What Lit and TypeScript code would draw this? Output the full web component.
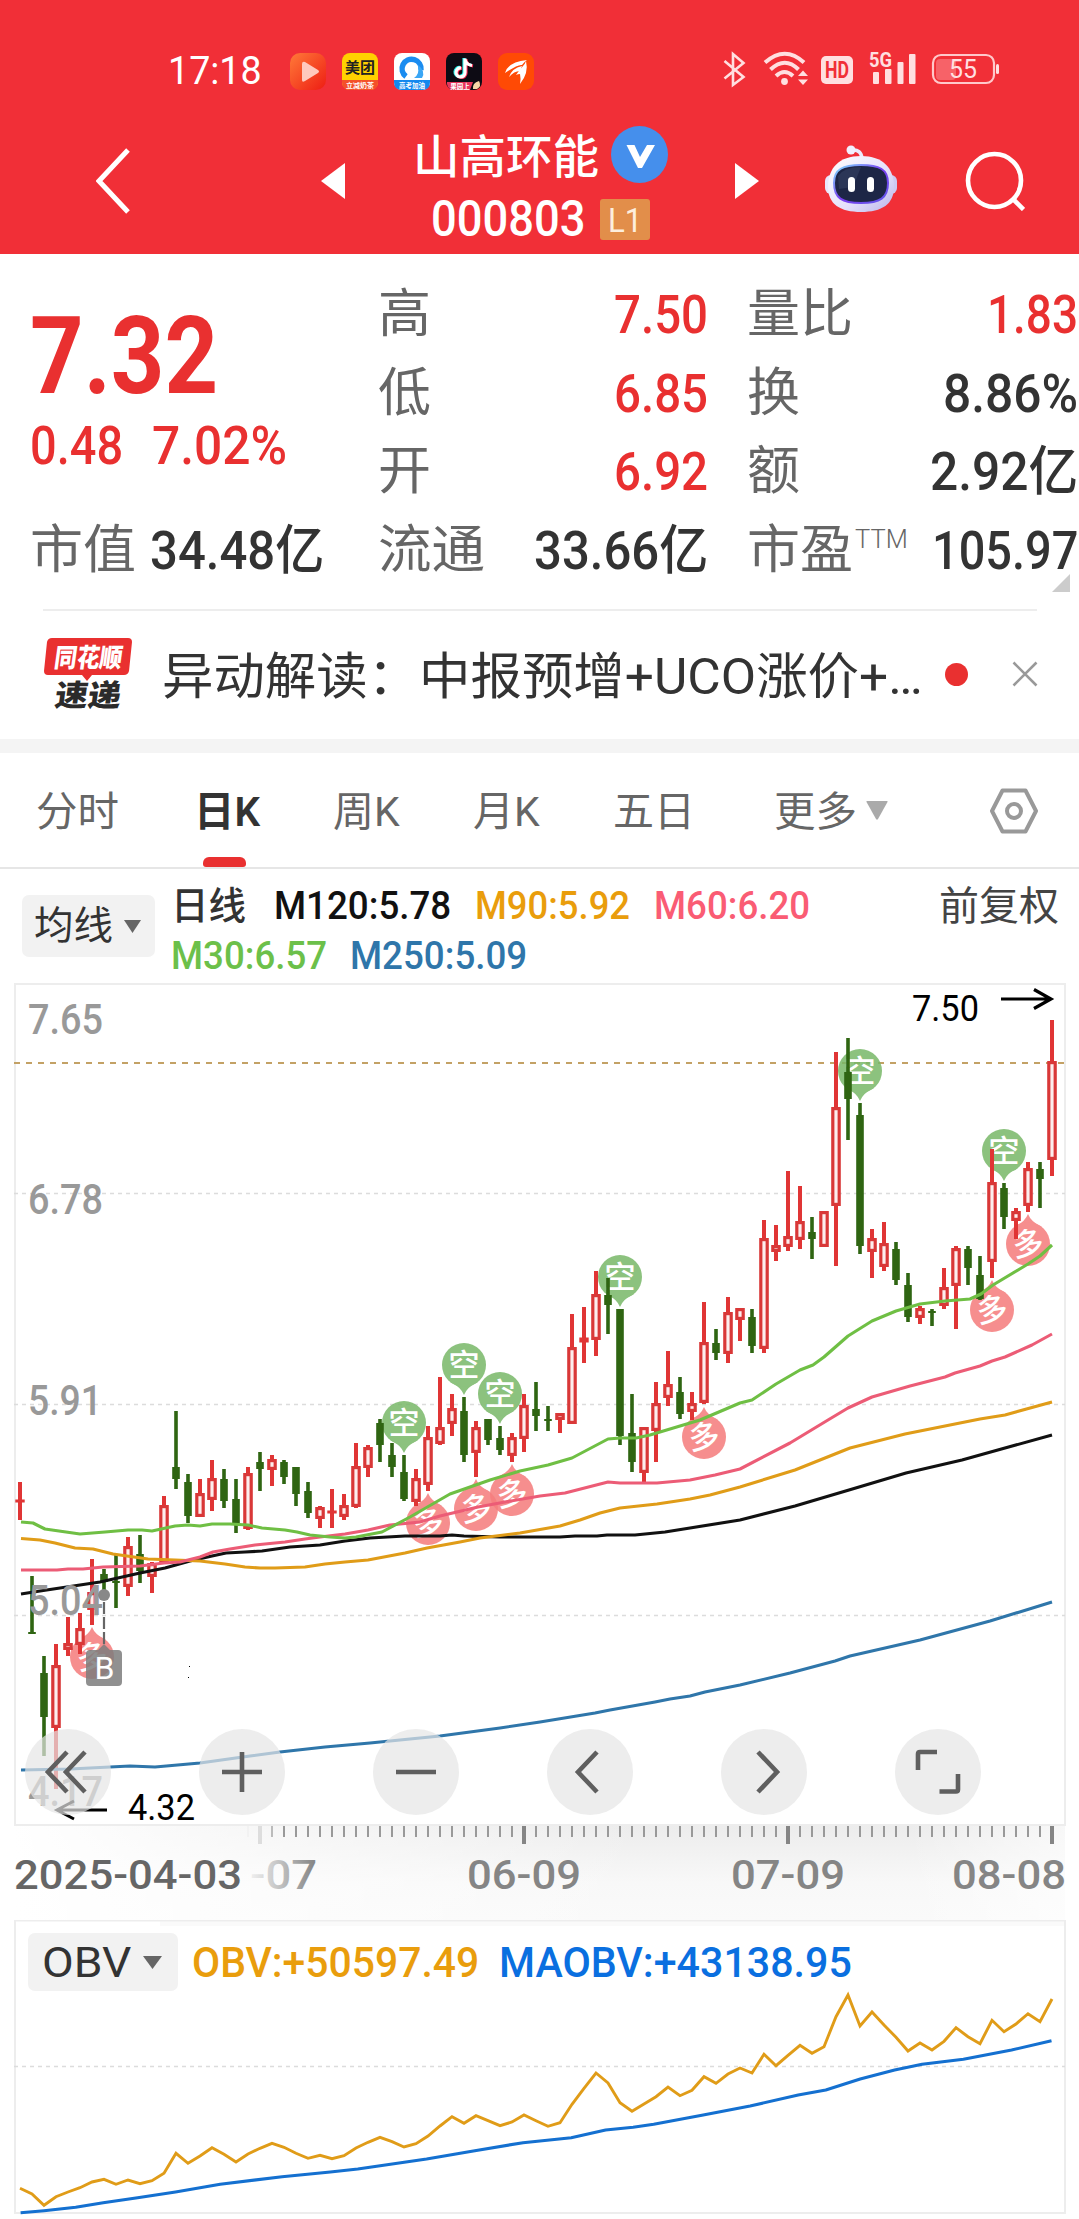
import { LitElement, html, css, svg } from "lit";
import { customElement, property, state } from "lit/decorators.js";

/** Single line of text squeezed or stretched horizontally to a given width. */
@customElement("fit-text")
class FitText extends LitElement {
  @property({ type: Number }) w = 0;
  @state() private ratio = 1;

  static styles = css`
    :host { display: inline-block; white-space: nowrap; flex: none; text-align: left; }
    .in { display: inline-block; transform-origin: 0 50%; }
    .box { display: block; }
  `;

  firstUpdated() {
    const el = this.renderRoot.querySelector(".in") as HTMLElement;
    const n = el.offsetWidth;
    if (n > 0) this.ratio = this.w / n;
  }

  render() {
    return html`<span class="box" style="width:${this.w}px"
      ><span class="in" style="transform:scaleX(${this.ratio})"><slot></slot></span></span>`;
  }
}

type Candle = [number, number, number, number, number];

// [up, high, body top, body bottom, low] in chart pixels
const CANDLES: Candle[] = [
  [1, 1482, 1500, 1502, 1520], [0, 1576, 1632, 1634, 1634], [0, 1656, 1673, 1717, 1756],
  [1, 1644, 1665, 1728, 1789], [1, 1617, 1643, 1650, 1656], [1, 1613, 1628, 1645, 1654],
  [1, 1559, 1592, 1610, 1625], [0, 1569, 1574, 1582, 1596], [0, 1555, 1581, 1583, 1608],
  [1, 1537, 1546, 1587, 1596], [0, 1535, 1554, 1571, 1583], [1, 1562, 1563, 1577, 1593],
  [1, 1496, 1505, 1564, 1564], [0, 1411, 1467, 1479, 1489], [0, 1474, 1482, 1516, 1523],
  [1, 1479, 1493, 1517, 1517], [1, 1460, 1478, 1500, 1511], [0, 1469, 1479, 1501, 1508],
  [0, 1479, 1499, 1523, 1533], [1, 1467, 1473, 1529, 1530], [0, 1452, 1462, 1469, 1491],
  [1, 1455, 1459, 1470, 1486], [0, 1460, 1462, 1477, 1484], [0, 1467, 1467, 1494, 1506],
  [0, 1482, 1491, 1513, 1518], [1, 1506, 1507, 1519, 1528], [1, 1489, 1511, 1513, 1528],
  [1, 1494, 1505, 1517, 1520], [1, 1443, 1466, 1507, 1508], [1, 1445, 1447, 1468, 1477],
  [0, 1419, 1423, 1445, 1462], [0, 1443, 1455, 1467, 1477], [0, 1455, 1472, 1499, 1501],
  [1, 1469, 1478, 1502, 1506], [1, 1426, 1437, 1485, 1491], [1, 1377, 1427, 1444, 1445],
  [1, 1394, 1408, 1424, 1436], [0, 1397, 1411, 1455, 1462], [1, 1421, 1427, 1453, 1477],
  [0, 1419, 1419, 1440, 1445], [0, 1426, 1438, 1450, 1455], [1, 1433, 1437, 1456, 1462],
  [1, 1394, 1405, 1439, 1452], [0, 1382, 1409, 1416, 1431], [0, 1406, 1419, 1421, 1431],
  [1, 1413, 1413, 1420, 1433], [1, 1314, 1347, 1424, 1424], [1, 1307, 1338, 1342, 1363],
  [1, 1271, 1294, 1340, 1356], [0, 1278, 1295, 1305, 1334], [0, 1309, 1309, 1436, 1445],
  [0, 1394, 1433, 1462, 1472], [1, 1427, 1427, 1473, 1482], [1, 1382, 1403, 1431, 1462],
  [1, 1351, 1384, 1398, 1406], [0, 1377, 1392, 1414, 1419], [1, 1392, 1403, 1412, 1420],
  [1, 1302, 1342, 1403, 1404], [0, 1329, 1343, 1353, 1360], [1, 1297, 1312, 1354, 1363],
  [1, 1308, 1308, 1320, 1341], [0, 1309, 1317, 1346, 1353], [1, 1220, 1238, 1349, 1353],
  [1, 1225, 1245, 1252, 1261], [1, 1171, 1236, 1247, 1251], [1, 1186, 1221, 1240, 1249],
  [0, 1217, 1232, 1239, 1259], [1, 1211, 1211, 1247, 1247], [1, 1052, 1107, 1206, 1266],
  [0, 1038, 1072, 1099, 1140], [0, 1103, 1115, 1246, 1254], [1, 1229, 1238, 1252, 1278],
  [1, 1222, 1243, 1267, 1271], [0, 1242, 1249, 1280, 1285], [0, 1273, 1285, 1317, 1322],
  [1, 1306, 1308, 1318, 1324], [0, 1309, 1311, 1313, 1326], [1, 1268, 1287, 1306, 1309],
  [1, 1246, 1248, 1286, 1329], [0, 1246, 1249, 1268, 1285], [0, 1256, 1275, 1299, 1300],
  [1, 1149, 1182, 1262, 1278], [0, 1183, 1188, 1217, 1229], [1, 1208, 1211, 1221, 1239],
  [1, 1162, 1168, 1206, 1212], [0, 1162, 1169, 1179, 1208], [1, 1020, 1061, 1160, 1176],
];

const MA = {
  m250: "21,1770 70,1769 110,1767 130,1766 155,1767 200,1763 250,1756 280,1752 325,1747 370,1743 440,1736 500,1728 540,1722 595,1713 610,1710 655,1702 670,1699 690,1696 705,1692 740,1685 790,1673 835,1661 850,1656 920,1640 990,1621 1052,1602",
  m120: "21,1594 40,1591 100,1582 140,1573 165,1568 190,1561 212,1556 226,1553 245,1552 262,1551 290,1547 320,1545 345,1541 370,1538 405,1536 440,1536 452,1535 464,1536 500,1537 560,1537 575,1536 597,1536 607,1535 635,1535 665,1532 690,1528 740,1520 795,1506 849,1490 906,1473 962,1460 1052,1435",
  m90: "21,1538.5 40,1540 55,1543 75,1548 93,1549 113,1554 148,1559 175,1560 200,1561 225,1564 245,1567 260,1568 275,1568 305,1567 325,1564 345,1562 368,1560 405,1553 427,1548 460,1542 480,1538 520,1533 560,1526 580,1520 600,1513 620,1508 657,1504 690,1499 710,1495 740,1487 795,1470 850,1448 905,1434 980,1419 1005,1415 1052,1402",
  m60: "21,1570 57,1570 68,1569 83,1569 103,1567 140,1566 164,1563 180,1562 200,1557 213,1552 230,1549 255,1545 285,1542 305,1539 320,1537 345,1534 368,1530 390,1525 420,1522 440,1516 478,1507 505,1502 540,1496 565,1493 608,1482 620,1483 657,1483 690,1480 715,1475 740,1469 790,1443 828,1420 848,1408 872,1397 910,1386 945,1377 955,1373 980,1366 992,1361 1005,1357 1032,1345 1052,1334",
  m30: "21,1522 33,1523 45,1529 80,1534 105,1532 128,1530 142,1530 152,1531 175,1526 188,1525 200,1526 212,1524 230,1524 248,1525 262,1528 285,1530 297,1532 310,1535 330,1537 345,1538 356,1537 382,1532 410,1517 450,1494 490,1480 520,1471 548,1465 572,1458 608,1439 620,1438 636,1438 650,1435 700,1420 740,1403 752,1400 776,1384 800,1370 813,1365 824,1357 848,1336 872,1321 896,1311 920,1304 945,1301 970,1299 981,1294 993,1285 1028,1264 1040,1256 1052,1245",
};

const OBV = [
  865, 882, 916, 890, 876, 863, 846, 838, 853, 840, 851, 842, 820, 760, 790, 768, 743, 763, 786, 762,
  745, 730, 742, 760, 775, 766, 776, 767, 744, 727, 712, 725, 741, 731, 708, 678, 650, 670, 647, 662,
  677, 666, 645, 662, 679, 668, 613, 565, 519, 549, 608, 634, 612, 590, 561, 587, 571, 530, 550, 522,
  504, 519, 463, 497, 466, 436, 460, 440, 350, 285, 378, 336, 375, 412, 453, 429, 450, 424, 383, 410,
  431, 361, 395, 372, 341, 365, 297,
].map((v, i) => `${20 + i * 12},${(1900 + v / 3).toFixed(1)}`).join(" ");

const MAOBV = [
  [30, 938], [64, 932], [110, 922], [150, 908], [200, 893], [255, 876], [320, 853], [410, 830], [480, 816],
  [520, 807], [620, 777], [690, 752], [760, 728], [830, 713], [880, 690], [920, 682], [950, 673], [1020, 646],
  [1090, 618], [1160, 585], [1200, 570], [1250, 537], [1300, 510], [1340, 493], [1400, 478], [1470, 450], [1528, 422],
].map(([x, y]) => `${(x / 1.4532).toFixed(1)},${(1900 + y / 3).toFixed(1)}`).join(" ");

const SHORTS = [[404, 1423], [464, 1365], [500, 1394], [620, 1277], [860, 1071], [1004, 1151]];
const LONGS = [[92, 1657], [428, 1523], [476, 1509], [512, 1494], [704, 1437], [992, 1310], [1028, 1244]];

const label = (x: number, y: number, w: number, size: number, cls: string, t: string) =>
  svg`<text class=${cls} x=${x} y=${y} font-size=${size} textLength=${w} lengthAdjust="spacingAndGlyphs">${t}</text>`;

const candle = ([up, h, t, b, l]: Candle, i: number) => {
  const x = 20 + i * 12;
  if (!up) {
    return svg`<rect class="dn" x=${x - 1.8} y=${h} width="3.6" height=${Math.max(l - h, 1)}></rect>
      <rect class="dn" x=${x - 3.8} y=${t} width="7.6" height=${b - t}></rect>`;
  }
  const body = b - t < 6
    ? svg`<rect class="up" x=${x - 4.7} y=${t - 0.5} width="9.4" height=${b - t + 1}></rect>`
    : svg`<rect class="hollow" x=${x - 3.2} y=${t + 1.6} width="6.4" height=${b - t - 3.2}></rect>`;
  return svg`<rect class="up" x=${x - 2} y=${h} width="4" height=${t - h}></rect>
    <rect class="up" x=${x - 2} y=${b} width="4" height=${l - b}></rect>${body}`;
};

@customElement("app-root")
class AppRoot extends LitElement {
  static styles = css`
    :host {
      display: block; width: 1079px; height: 2219px; overflow: hidden; background: #fff; color: #333;
      font-family: Roboto, "Noto Sans CJK SC", "Liberation Sans", sans-serif;
    }
    * { box-sizing: border-box; }
    svg { display: block; flex: none; }
    .header { background: #f12f37; height: 254px; color: #fff; padding-top: 49px; }
    .status { display: flex; align-items: center; height: 44px; padding-left: 168px; }
    .clock { font-size: 38px; line-height: 44px; margin-right: 28px; }
    .apps { display: flex; gap: 16px; flex: 1; }
    .nav { display: flex; align-items: center; height: 161px; padding: 14px 0 0 96px; }
    .prev { margin-left: 191px; }
    .title { width: 390px; margin-top: 12px; }
    .line { display: flex; justify-content: center; align-items: center; height: 65px; }
    .line.second { height: 59px; }
    .name { font-size: 46px; line-height: 65px; font-weight: 500; margin-right: 12px; }
    .code { font-size: 50px; line-height: 59px; font-weight: 500; margin-right: 14px; }
    .vip { margin-bottom: 5px; }
    .level { width: 50px; height: 41px; background: #e28e4a; border-radius: 3px; display: flex; justify-content: center; font-size: 34px; line-height: 42px; color: #fdeedd; }
    .robot { margin: -3px 0 0 65px; }
    .search { margin-left: 67px; }

    .quote { display: flex; height: 355px; padding: 22px 0 0 30px; position: relative; }
    .main { width: 294px; margin-right: 54px; }
    .price { height: 149px; padding-top: 13px; font-size: 107px; line-height: 136px; font-weight: 700; color: #e93030; }
    .change { display: flex; gap: 29px; height: 87px; line-height: 42px; font-size: 53px; font-weight: 500; color: #e93030; }
    .col { width: 330px; margin-right: 39px; }
    .col.last { width: 331px; margin-right: 0; }
    .row { height: 78.6px; display: flex; justify-content: space-between; align-items: center; line-height: 78px; }
    .k { font-size: 52px; color: #666; flex: none; display: flex; }
    .ttm { font-size: 26px; line-height: 54px; font-weight: 300; margin-left: 2px; }
    .v { font-size: 53px; font-weight: 500; color: #333; }
    .red { color: #e93030; }
    .corner { position: absolute; left: 1052px; top: 320px; }

    .news { margin: 0 42px 0 43px; border-top: 2px solid #ededed; height: 130px; display: flex; align-items: center; padding-bottom: 2px; }
    .logo { margin-left: -1px; overflow: visible; }
    .headline { font-size: 50px; line-height: 70px; margin: 5px 0 0 28px; }
    .dot { width: 23px; height: 23px; border-radius: 50%; background: #e93030; margin-left: 22px; flex: none; }
    .close { margin-left: 44px; }
    .strip { height: 14px; background: #f4f4f4; }

    .tabs { display: flex; height: 116px; border-bottom: 2px solid #e6e6e6; padding-left: 36px; font-size: 41px; line-height: 118px; color: #666; }
    .tab { flex: none; display: flex; flex-direction: column; align-items: center; }
    .tab fit-text { height: 104px; }
    .tab.on { color: #333; font-weight: 600; }
    .bar { width: 43px; height: 11px; border-radius: 6px 6px 3px 3px; background: #e93030; margin-right: 6px; }
    .g1 { margin-left: 75px; } .g2 { margin-left: 73px; } .g3 { margin-left: 73px; }
    .g4 { margin-left: 73px; } .g5 { margin-left: 79px; }
    .more { margin: 48px 0 0 9px; }
    .gear { margin: 35px 0 0 102px; }

    .legend { display: flex; height: 114px; padding: 0 0 0 22px; }
    .chip { background: #f2f2f2; border-radius: 7px; display: flex; align-items: center; flex: none; }
    .ma { width: 133px; height: 62px; margin-top: 26px; padding-left: 12px; font-size: 39px; line-height: 64px; gap: 11px; }
    .lines { padding-top: 12px; margin-left: 16px; flex: 1; }
    .lr { display: flex; height: 50px; line-height: 50px; font-size: 39px; font-weight: 500; }
    .day { font-size: 38px; margin-right: 28px; width: 75px; }
    .c120 { color: #111; margin-right: 24px; } .c90 { color: #e99d0c; margin-right: 24px; }
    .c60 { color: #fa5c74; } .c30 { color: #6cc04a; margin-right: 23px; } .c250 { color: #2f76aa; }
    .adj { font-size: 40px; line-height: 50px; margin: 13px 20px 0 0; color: #444; }

    .chart { position: relative; height: 937px; }
    .tools { position: absolute; left: 25px; top: 746px; display: flex; gap: 88px; }
    .tool { width: 86px; height: 86px; border-radius: 50%; background: rgba(229, 229, 229, 0.7); display: flex; align-items: center; justify-content: center; }
    .tool path { fill: none; stroke: #5f5f5f; stroke-width: 4.6; }

    .obv { position: relative; height: 299px; }
    .obvhead { position: absolute; left: 28px; top: 13px; display: flex; align-items: center; height: 58px; font-size: 42px; line-height: 61px; }
    .obvchip { width: 150px; height: 58px; padding-left: 14px; gap: 12px; margin-right: 14px; color: #333; }
    .o1 { color: #e99d0c; font-weight: 500; margin-right: 20px; }
    .o2 { color: #0a6fe0; font-weight: 500; }

    .dn { fill: #2f6512; }
    .up { fill: #e03535; }
    .hollow { fill: #fdeeee; stroke: #d93838; stroke-width: 3.2; }
    .ln { fill: none; stroke-width: 3.1; stroke-linejoin: round; }
    .frame { fill: none; stroke: #ededed; stroke-width: 2; }
    .grid { stroke: #dcdcdc; stroke-width: 1.3; stroke-dasharray: 4 4; }
    .ax { fill: #999; font-weight: 500; }
    .date { fill: #858585; font-weight: 500; }
    .date0 { fill: #666; font-weight: 500; }
    .blk { fill: #000; font-weight: 400; }
    .pin { font-size: 31px; font-weight: 500; text-anchor: middle; fill: #fff; }
    .b { font-size: 32px; text-anchor: middle; fill: #fff; }
  `;

  private appIcons() {
    const cjk = "Noto Sans CJK SC";
    return html`
      <svg width="36" height="37" viewBox="0 0 36 37"><defs><linearGradient id="v" x1="0" y1="0" x2="1" y2="1"><stop offset="0" stop-color="#ff7a38"></stop><stop offset="1" stop-color="#ee1d14"></stop></linearGradient></defs>
        <rect width="36" height="37" rx="10" fill="url(#v)"></rect><path d="M12 11v16q0 3 3 1l13-8q2-1.500 0-3l-13-8q-3-1-3 2z" fill="#ffc9bd"></path></svg>
      <svg width="36" height="37" viewBox="0 0 36 37"><rect width="36" height="37" rx="8" fill="#ffd100"></rect>
        <path d="M0 27h36v2q0 8-8 8H8q-8 0-8-8z" fill="#f4502a"></path>
        <text x="18" y="20" font-family=${cjk} font-size="15" font-weight="700" text-anchor="middle" fill="#222">美团</text>
        <text x="18" y="35" font-family=${cjk} font-size="7" font-weight="700" text-anchor="middle" fill="#fff">立减奶茶</text></svg>
      <svg width="36" height="37" viewBox="0 0 36 37"><rect width="36" height="37" rx="8" fill="#fff"></rect>
        <path d="M0 27h36v2q0 8-8 8H8q-8 0-8-8z" fill="#1388ee"></path>
        <path d="M12 23.500A9.500 9.500 0 1 1 27 17" fill="none" stroke="#1b8cf0" stroke-width="5.500"></path>
        <path d="M24 12q8 6 4 13h-8q6-4 4-13z" fill="#3aa6f5"></path>
        <text x="18" y="35" font-family=${cjk} font-size="6.500" font-weight="700" text-anchor="middle" fill="#fff">高考加油</text></svg>
      <svg width="36" height="37" viewBox="0 0 36 37"><rect width="36" height="37" rx="8" fill="#0d0b14"></rect>
        <g fill="none" stroke-width="3.200"><path d="M18 5v14a4.500 4.500 0 1 1-4-4.500M18 6q1 5 7 6" stroke="#25f4ee"></path><path d="M20 6v14a4.500 4.500 0 1 1-4-4.500M20 7q1 5 7 6" stroke="#fe2c55"></path><path d="M19 5.500v14a4.500 4.500 0 1 1-4-4.500M19 6.500q1 5 7 6" stroke="#fff"></path></g>
        <path d="M1 29h26l-3 8H8q-6 0-7-6z" fill="#e8355c"></path><path d="M27 36q-1-6 6-8 3 5-2 8z" fill="#f6d8a8"></path>
        <text x="14" y="35.500" font-family=${cjk} font-size="6.500" font-weight="700" text-anchor="middle" fill="#fff">果园上</text></svg>
      <svg width="36" height="37" viewBox="0 0 36 37"><rect width="36" height="37" rx="9" fill="#ff4a05"></rect>
        <path d="M7 20Q10 9 29 7 26 9 24 12 20 11 7 20z" fill="#fff"></path><path d="M11 24q3-9 13-11-1 3-2 5-6 0-11 6z" fill="#fff"></path><path d="M18 22q4-6 7-9 2-2 3-5 3 12-6 23 1-6 0-10-2 0-4 1z" fill="#fff"></path></svg>`;
  }

  private statusIcons() {
    return html`<svg width="379" height="44" viewBox="700 49 379 44" fill="none" stroke="#ffdfe0">
      <path d="M724.500 61l19 16-10.500 8V54l10.500 9-19 15.500" stroke-width="2.600"></path>
      <g stroke-width="4"><path d="M765 62.500Q785 45 804 62.500"></path><path d="M770.500 69.500Q785 56 798.500 69.500"></path><path d="M776 76Q784.500 68 793 76"></path></g>
      <g fill="#ffdfe0" stroke="none"><circle cx="784.500" cy="81.500" r="3.400"></circle><path d="M798 76l5-5.500 5 5.500zM798 79.500l5 5.500 5-5.500z"></path>
      <rect x="821" y="56" width="32" height="28" rx="5"></rect>
      <rect x="873" y="72" width="6" height="12" rx="1"></rect><rect x="885" y="69" width="6.500" height="15" rx="1"></rect><rect x="897.500" y="62" width="6" height="22" rx="1"></rect><rect x="909" y="54" width="6.500" height="30" rx="1"></rect>
      <text x="825" y="78" font-size="23" font-weight="700" fill="#f12f37" textLength="24" lengthAdjust="spacingAndGlyphs">HD</text>
      <text x="869" y="67" font-size="20" font-weight="700" textLength="23" lengthAdjust="spacingAndGlyphs">5G</text>
      <rect x="936" y="59" width="20" height="21" rx="4" fill="#f76268"></rect>
      <text x="949" y="78" font-size="25" textLength="28" lengthAdjust="spacingAndGlyphs">55</text>
      <rect x="996" y="64" width="3" height="10" rx="1.500"></rect></g>
      <rect x="933" y="55" width="61" height="28" rx="8" stroke-width="2.200" stroke="#ffc8ca"></rect>
    </svg>`;
  }

  private header() {
    return html`<div class="header">
      <div class="status">
        <fit-text class="clock" w="94">17:18</fit-text>
        <div class="apps">${this.appIcons()}</div>
        ${this.statusIcons()}
      </div>
      <div class="nav">
        <svg width="34" height="66" viewBox="0 0 34 66"><path d="M32 2L3 33l29 31" fill="none" stroke="#fff" stroke-width="5"></path></svg>
        <svg class="prev" width="24" height="36" viewBox="0 0 24 36"><path d="M24 0v36L0 18z" fill="#fff"></path></svg>
        <div class="title">
          <div class="line"><fit-text class="name" w="186">山高环能</fit-text>
            <svg class="vip" width="57" height="57" viewBox="0 0 57 57"><circle cx="28.500" cy="28.500" r="28.500" fill="#458fec"></circle><path d="M15.500 19h8l5.500 12 7-12h8L31 42h-4z" fill="#fff"></path></svg></div>
          <div class="line second"><fit-text class="code" w="155">000803</fit-text><span class="level"><fit-text w="34">L1</fit-text></span></div>
        </div>
        <svg width="24" height="36" viewBox="0 0 24 36"><path d="M0 0v36l24-18z" fill="#fff"></path></svg>
        <svg class="robot" width="74" height="68" viewBox="824 145 74 68">
          <defs><linearGradient id="hd" x1="0" y1="0" x2="1" y2="1"><stop offset="0" stop-color="#fff"></stop><stop offset="0.600" stop-color="#e4e0fa"></stop><stop offset="1" stop-color="#b9b4ea"></stop></linearGradient>
          <linearGradient id="rim" x1="0" y1="0" x2="1" y2="1"><stop offset="0" stop-color="#7fe3ff"></stop><stop offset="0.500" stop-color="#7a3df0"></stop><stop offset="1" stop-color="#5f58e8"></stop></linearGradient></defs>
          <path d="M852 150q9-1 10 8" fill="none" stroke="#eceafc" stroke-width="3.500"></path><circle cx="851" cy="150" r="4.500" fill="#f1effd"></circle>
          <rect x="825" y="175" width="12" height="19" rx="6" fill="#e9e6fb"></rect><rect x="885" y="175" width="12" height="19" rx="6" fill="#cdc9f2"></rect>
          <path d="M861 156c22 0 33 12 33 31 0 17-12 25-33 25s-33-8-33-25c0-19 11-31 33-31z" fill="url(#hd)"></path>
          <path d="M861 165c18 0 27 4 27 18 0 15-8 20-27 20s-27-5-27-20c0-14 9-18 27-18z" fill="#1d2646" stroke="url(#rim)" stroke-width="2"></path>
          <path d="M838 176q6-9 23-9l-8 20-14 2z" fill="#3a4668" opacity="0.500"></path>
          <rect x="848" y="177" width="7" height="15" rx="3.500" fill="#fff"></rect><rect x="867" y="177" width="7" height="15" rx="3.500" fill="#fff"></rect>
        </svg>
        <svg class="search" width="60" height="60" viewBox="965 151 60 60" fill="none" stroke="#fff" stroke-width="4.600"><circle cx="994.500" cy="180.500" r="26.500"></circle><path d="M1012.500 198.500l11 11"></path></svg>
      </div>
    </div>`;
  }

  private quote() {
    const row = (k: string, kw: number, v: string, vw: number, red = false) =>
      html`<div class="row"><span class="k"><fit-text w=${kw}>${k}</fit-text></span><fit-text class="v ${red ? "red" : ""}" w=${vw}>${v}</fit-text></div>`;
    return html`<div class="quote">
      <div class="main">
        <div class="price"><fit-text w="188">7.32</fit-text></div>
        <div class="change"><fit-text w="93">0.48</fit-text><fit-text w="135">7.02%</fit-text></div>
        ${row("市值", 106, "34.48亿", 174)}
      </div>
      <div class="col">${row("高", 53, "7.50", 94, true)}${row("低", 53, "6.85", 94, true)}${row("开", 53, "6.92", 94, true)}${row("流通", 107, "33.66亿", 174)}</div>
      <div class="col last">${row("量比", 106, "1.83", 91, true)}${row("换", 53, "8.86%", 135)}${row("额", 53, "2.92亿", 148)}
        <div class="row"><span class="k"><fit-text w="106">市盈</fit-text><fit-text class="ttm" w="53">TTM</fit-text></span><fit-text class="v" w="146">105.97</fit-text></div></div>
      <svg class="corner" width="18" height="18"><path d="M18 0v18H0z" fill="#ccc"></path></svg>
    </div>`;
  }

  private news() {
    return html`<div class="news">
      <svg class="logo" width="92" height="76" viewBox="42 636 92 76">
        <path d="M52 638h76q4 0 4 4l-3 29q-1 4-5 4H92l-5 6-5-6H48q-4 0-4-4l3-29q1-4 5-4z" fill="#e93030"></path>
        <g transform="skewX(-8)" font-family="Noto Sans CJK SC" font-weight="900">
          <text x="147" y="667" font-size="26" fill="#fff" textLength="68" lengthAdjust="spacingAndGlyphs">同花顺</text>
          <text x="153" y="706" font-size="30" fill="#2b2b2b" textLength="66" lengthAdjust="spacingAndGlyphs">速递</text></g>
      </svg>
      <fit-text class="headline" w="761">异动解读：中报预增+UCO涨价+…</fit-text>
      <span class="dot"></span>
      <svg class="close" width="26" height="26" viewBox="0 0 26 26"><path d="M1.500 1.500l23 23M24.500 1.500l-23 23" stroke="#999" stroke-width="2.600"></path></svg>
    </div><div class="strip"></div>`;
  }

  private tabs() {
    return html`<div class="tabs">
      <span class="tab"><fit-text w="83">分时</fit-text></span>
      <span class="tab on g1"><fit-text w="66">日K</fit-text><span class="bar"></span></span>
      <span class="tab g2"><fit-text w="67">周K</fit-text></span>
      <span class="tab g3"><fit-text w="67">月K</fit-text></span>
      <span class="tab g4"><fit-text w="82">五日</fit-text></span>
      <span class="tab g5"><fit-text w="83">更多</fit-text></span>
      <svg class="more" width="22" height="19" viewBox="0 0 22 19"><path d="M1 0h20q1 0 .5 1L12 18q-1 1.500-2 0L.5 1Q0 0 1 0z" fill="#aaa"></path></svg>
      <svg class="gear" width="48" height="46" viewBox="0 0 48 46" fill="none" stroke="#999" stroke-width="4"><path d="M12.500 2.500h23L46 23 35.500 43.500h-23L2 23z" stroke-linejoin="round"></path><circle cx="24" cy="23" r="7"></circle></svg>
    </div>
    <div class="legend">
      <span class="chip ma"><fit-text w="79">均线</fit-text><svg width="17" height="13" viewBox="0 0 17 13"><path d="M0 0h17L8.500 13z" fill="#666"></path></svg></span>
      <div class="lines">
        <div class="lr"><fit-text class="day" w="75">日线</fit-text><fit-text class="c120" w="177">M120:5.78</fit-text><fit-text class="c90" w="155">M90:5.92</fit-text><fit-text class="c60" w="156">M60:6.20</fit-text></div>
        <div class="lr"><fit-text class="c30" w="156">M30:6.57</fit-text><fit-text class="c250" w="177">M250:5.09</fit-text></div>
      </div>
      <fit-text class="adj" w="120">前复权</fit-text>
    </div>`;
  }

  private pins() {
    return svg`<g opacity="0.85" fill="#78b868">${SHORTS.map(([x, y]) => svg`
        <path d="M${x - 14} ${y + 17}Q${x - 3} ${y + 22} ${x} ${y + 30}Q${x + 3} ${y + 22} ${x + 14} ${y + 17}z"></path>
        <circle cx=${x} cy=${y} r="22"></circle><text class="pin" x=${x} y=${y + 11}>空</text>`)}</g>
      ${LONGS.map(([x, y]) => svg`<g fill="#f57f7f" opacity="0.88">
        <path d="M${x - 14} ${y - 17}Q${x - 3} ${y - 22} ${x} ${y - 30}Q${x + 3} ${y - 22} ${x + 14} ${y - 17}z"></path>
        <circle cx=${x} cy=${y} r="22"></circle><text class="pin" x=${x} y=${y + 11} transform="rotate(-8 ${x} ${y})">多</text></g>`)}`;
  }

  private chart() {
    const ticks = [];
    for (let i = 0; i <= 67; i++) {
      const x = 248 + i * 12;
      const major = (i - 1) % 22 === 0;
      const color = i === 0 ? "#f2f2f2" : i === 1 ? "#ddd" : i === 2 ? "#bbb" : major ? "#858585" : "#999";
      ticks.push(svg`<rect x=${x - (major ? 2 : 1)} y="1826" width=${major ? 4 : 2} height=${major ? 18 : 11} fill=${color}></rect>`);
    }
    const tool = (d: string) => html`<span class="tool"><svg width="50" height="50" viewBox="-25 -25 50 50"><path d=${d}></path></svg></span>`;
    return html`<div class="chart">
      <svg width="1079" height="937" viewBox="0 983 1079 937">
        <defs>
          <linearGradient id="av" x1="0" y1="0" x2="0" y2="1"><stop offset="0" stop-color="#ececec"></stop><stop offset="0.600" stop-color="#f8f8f8"></stop><stop offset="1" stop-color="#fafafa"></stop></linearGradient>
          <linearGradient id="ah" x1="0" y1="0" x2="1" y2="0"><stop offset="0" stop-color="#fff"></stop><stop offset="0.150" stop-color="#fff" stop-opacity="0.700"></stop><stop offset="0.600" stop-color="#fff" stop-opacity="0"></stop><stop offset="0.850" stop-color="#fff" stop-opacity="0"></stop><stop offset="1" stop-color="#fff" stop-opacity="0.600"></stop></linearGradient>
          <linearGradient id="fd" gradientUnits="userSpaceOnUse" x1="250" y1="0" x2="318" y2="0"><stop offset="0" stop-color="#f0f0f0"></stop><stop offset="0.350" stop-color="#ccc"></stop><stop offset="1" stop-color="#808080"></stop></linearGradient>
        </defs>
        <rect x="15" y="1825" width="1050" height="95" fill="url(#av)"></rect>
        <rect x="15" y="1825" width="1050" height="95" fill="url(#ah)"></rect>
        <rect class="frame" x="15" y="984" width="1050" height="841"></rect>
        ${[1193.5, 1404.5, 1615.5].map((y) => svg`<line class="grid" x1="14" x2="1065" y1=${y} y2=${y}></line>`)}
        <line x1="14" x2="1065" y1="1063" y2="1063" stroke="#c3a165" stroke-width="2" stroke-dasharray="6 6"></line>
        ${this.pins()}
        ${CANDLES.map(candle)}
        <polyline class="ln" stroke="#2f76aa" points=${MA.m250}></polyline>
        <polyline class="ln" stroke="#111" points=${MA.m120}></polyline>
        <polyline class="ln" stroke="#e09c18" points=${MA.m90}></polyline>
        <polyline class="ln" stroke="#ec5c76" points=${MA.m60}></polyline>
        <polyline class="ln" stroke="#6fbf44" points=${MA.m30}></polyline>
        ${label(28, 1034, 75, 42, "ax", "7.65")}
        ${label(28, 1214, 75, 42, "ax", "6.78")}
        ${label(28, 1415, 74, 42, "ax", "5.91")}
        ${label(28, 1615, 75, 42, "ax", "5.04")}
        ${label(28, 1806, 75, 42, "ax", "4.17")}
        ${label(912, 1021, 67, 36, "blk", "7.50")}
        <path d="M1001 999h50M1034 989.500l17 9.500-17 9.500" fill="none" stroke="#000" stroke-width="3.200"></path>
        ${label(128, 1820, 67, 36, "blk", "4.32")}
        <path d="M107 1810H57M74 1801l-17 9 17 9" fill="none" stroke="#000" stroke-width="3"></path>
        <path d="M104 1602v42" stroke="#666" stroke-width="2.200" stroke-dasharray="12 3"></path>
        <circle cx="104" cy="1595" r="6" fill="#888"></circle>
        <path d="M98 1650l6-6 6 6h8q4 0 4 4v28q0 4-4 4H90q-4 0-4-4v-28q0-4 4-4z" fill="#7c7c7c" opacity="0.850"></path>
        <text class="b" x="104.500" y="1679">B</text>
        <rect x="189" y="1666" width="1" height="1"></rect><rect x="188" y="1677" width="1" height="1"></rect>
        ${ticks}
        ${label(14, 1889, 228, 41, "date0", "2025-04-03")}
        <text font-weight="500" fill="url(#fd)" x="250" y="1889" font-size="41" textLength="67" lengthAdjust="spacingAndGlyphs">-07</text>
        ${label(467, 1889, 114, 41, "date", "06-09")}
        ${label(731, 1889, 114, 41, "date", "07-09")}
        ${label(952, 1889, 114, 41, "date", "08-08")}
      </svg>
      <div class="tools">
        ${tool("M-1-20L-20 0-1 20M17-20L-2 0 17 20")}
        ${tool("M-20 0H20M0-20V20")}
        ${tool("M-20 0H20")}
        ${tool("M7-20L-12 0 7 20")}
        ${tool("M-6-20L13 0-6 20")}
        ${tool("M-20-2V-18q0-2 2-2H-1M20 2V17.500q0 2-2 2H1.500")}
      </div>
    </div>`;
  }

  private obv() {
    return html`<div class="obv">
      <svg width="1079" height="299" viewBox="0 1920 1079 299">
        <rect x="160" y="1920" width="905" height="6" fill="#fafafa"></rect>
        <rect class="frame" x="15" y="1920.500" width="1050" height="292.500"></rect>
        <line class="grid" x1="14" x2="1065" y1="2066.500" y2="2066.500"></line>
        <polyline points=${OBV} fill="none" stroke="#e09c18" stroke-width="2.900"></polyline>
        <polyline class="ln" points=${MAOBV} stroke="#1470d0"></polyline>
      </svg>
      <div class="obvhead">
        <span class="chip obvchip"><fit-text w="89">OBV</fit-text><svg width="19" height="13" viewBox="0 0 19 13"><path d="M0 0h19L9.500 13z" fill="#666"></path></svg></span>
        <fit-text class="o1" w="287">OBV:+50597.49</fit-text><fit-text class="o2" w="353">MAOBV:+43138.95</fit-text>
      </div>
    </div>`;
  }

  render() {
    return html`${this.header()}${this.quote()}${this.news()}${this.tabs()}${this.chart()}${this.obv()}`;
  }
}
